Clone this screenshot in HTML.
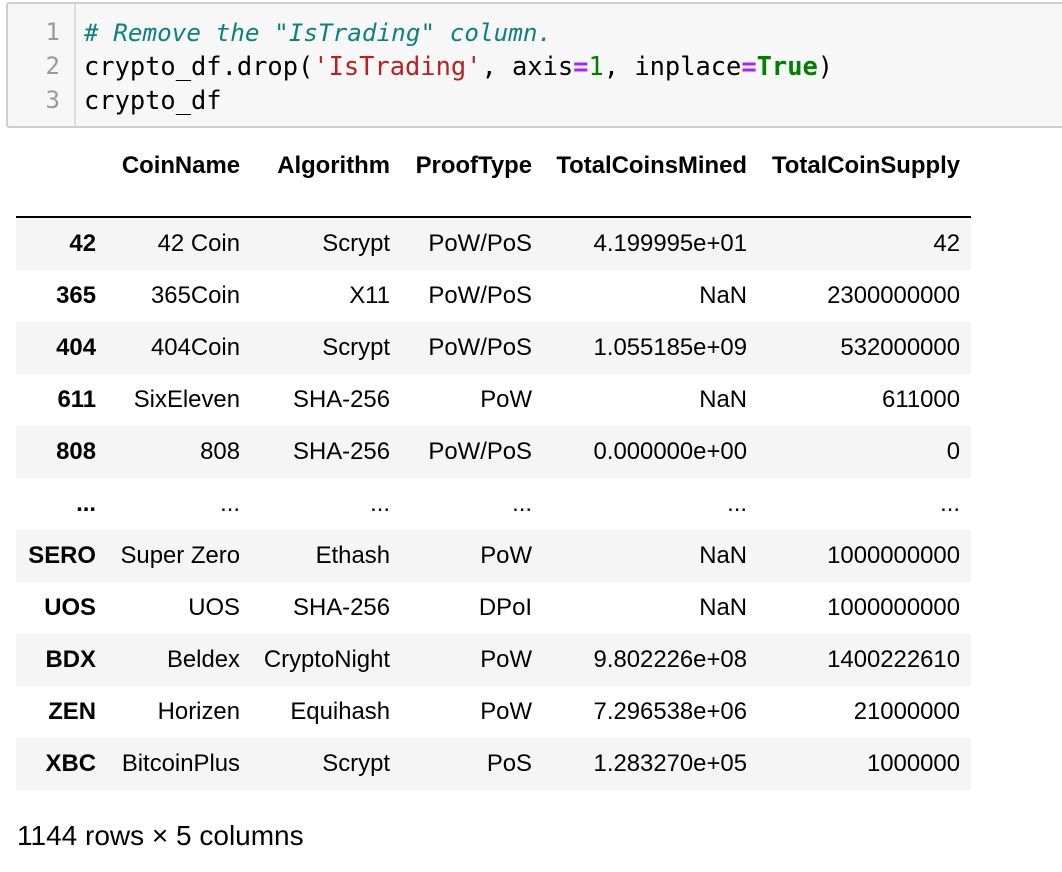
<!DOCTYPE html>
<html><head><style>
body{margin:0;background:#fff;width:1062px;height:872px;overflow:hidden;position:relative;font-family:"Liberation Sans",Arial,sans-serif}
.code{position:absolute;left:6px;top:2px;width:1060px;height:126px;background:#f7f7f7;border:2px solid #cfcfcf;border-radius:3px;box-sizing:border-box}
.gut{position:absolute;left:66px;top:0;bottom:0;border-left:2px solid #ddd}
.ln{position:absolute;left:0;width:52px;text-align:right;color:#999;font:24px "DejaVu Sans Mono","Liberation Mono",monospace}
.cl{position:absolute;left:76px;font:25.4px "DejaVu Sans Mono","Liberation Mono",monospace;color:#000;white-space:pre}
.cm{color:#0f8080;font-style:italic;font-size:24.3px}.st{color:#ba2121}.nu{color:#008000}.kw{color:#008000;font-weight:bold}.op{color:#aa22ff;font-weight:bold}
table{position:absolute;left:16px;top:141px;border-collapse:collapse;font-size:23.9px;color:#000}
td,th{text-align:right;padding:0 11px 0 0;height:52px;white-space:nowrap}
th{font-weight:bold}
thead th{height:76px;border-bottom:2px solid #000;vertical-align:top;padding-top:11px;box-sizing:border-box}
tbody tr:nth-child(odd){background:#f5f5f5}
.foot{position:absolute;left:17px;top:820px;font-size:28px}
</style></head><body>
<div class="code"><div class="gut"></div>
<div class="ln" style="top:14px">1</div><div class="ln" style="top:48px">2</div><div class="ln" style="top:82px">3</div>
<div class="cl" style="top:13px"><span class="cm"># Remove the "IsTrading" column.</span></div>
<div class="cl" style="top:47px">crypto_df.drop(<span class="st">'IsTrading'</span>, axis<span class="op">=</span><span class="nu">1</span>, inplace<span class="op">=</span><span class="kw">True</span>)</div>
<div class="cl" style="top:81px">crypto_df</div>
</div>
<table>
<colgroup><col style="width:91px"><col style="width:144px"><col style="width:150px"><col style="width:142px"><col style="width:215px"><col style="width:213px"></colgroup>
<thead><tr><th></th><th>CoinName</th><th>Algorithm</th><th>ProofType</th><th>TotalCoinsMined</th><th>TotalCoinSupply</th></tr></thead>
<tbody>
<tr><th>42</th><td>42 Coin</td><td>Scrypt</td><td>PoW/PoS</td><td>4.199995e+01</td><td>42</td></tr>
<tr><th>365</th><td>365Coin</td><td>X11</td><td>PoW/PoS</td><td>NaN</td><td>2300000000</td></tr>
<tr><th>404</th><td>404Coin</td><td>Scrypt</td><td>PoW/PoS</td><td>1.055185e+09</td><td>532000000</td></tr>
<tr><th>611</th><td>SixEleven</td><td>SHA-256</td><td>PoW</td><td>NaN</td><td>611000</td></tr>
<tr><th>808</th><td>808</td><td>SHA-256</td><td>PoW/PoS</td><td>0.000000e+00</td><td>0</td></tr>
<tr><th>...</th><td>...</td><td>...</td><td>...</td><td>...</td><td>...</td></tr>
<tr><th>SERO</th><td>Super Zero</td><td>Ethash</td><td>PoW</td><td>NaN</td><td>1000000000</td></tr>
<tr><th>UOS</th><td>UOS</td><td>SHA-256</td><td>DPoI</td><td>NaN</td><td>1000000000</td></tr>
<tr><th>BDX</th><td>Beldex</td><td>CryptoNight</td><td>PoW</td><td>9.802226e+08</td><td>1400222610</td></tr>
<tr><th>ZEN</th><td>Horizen</td><td>Equihash</td><td>PoW</td><td>7.296538e+06</td><td>21000000</td></tr>
<tr><th>XBC</th><td>BitcoinPlus</td><td>Scrypt</td><td>PoS</td><td>1.283270e+05</td><td>1000000</td></tr>
</tbody></table>
<div class="foot">1144 rows × 5 columns</div>
</body></html>
